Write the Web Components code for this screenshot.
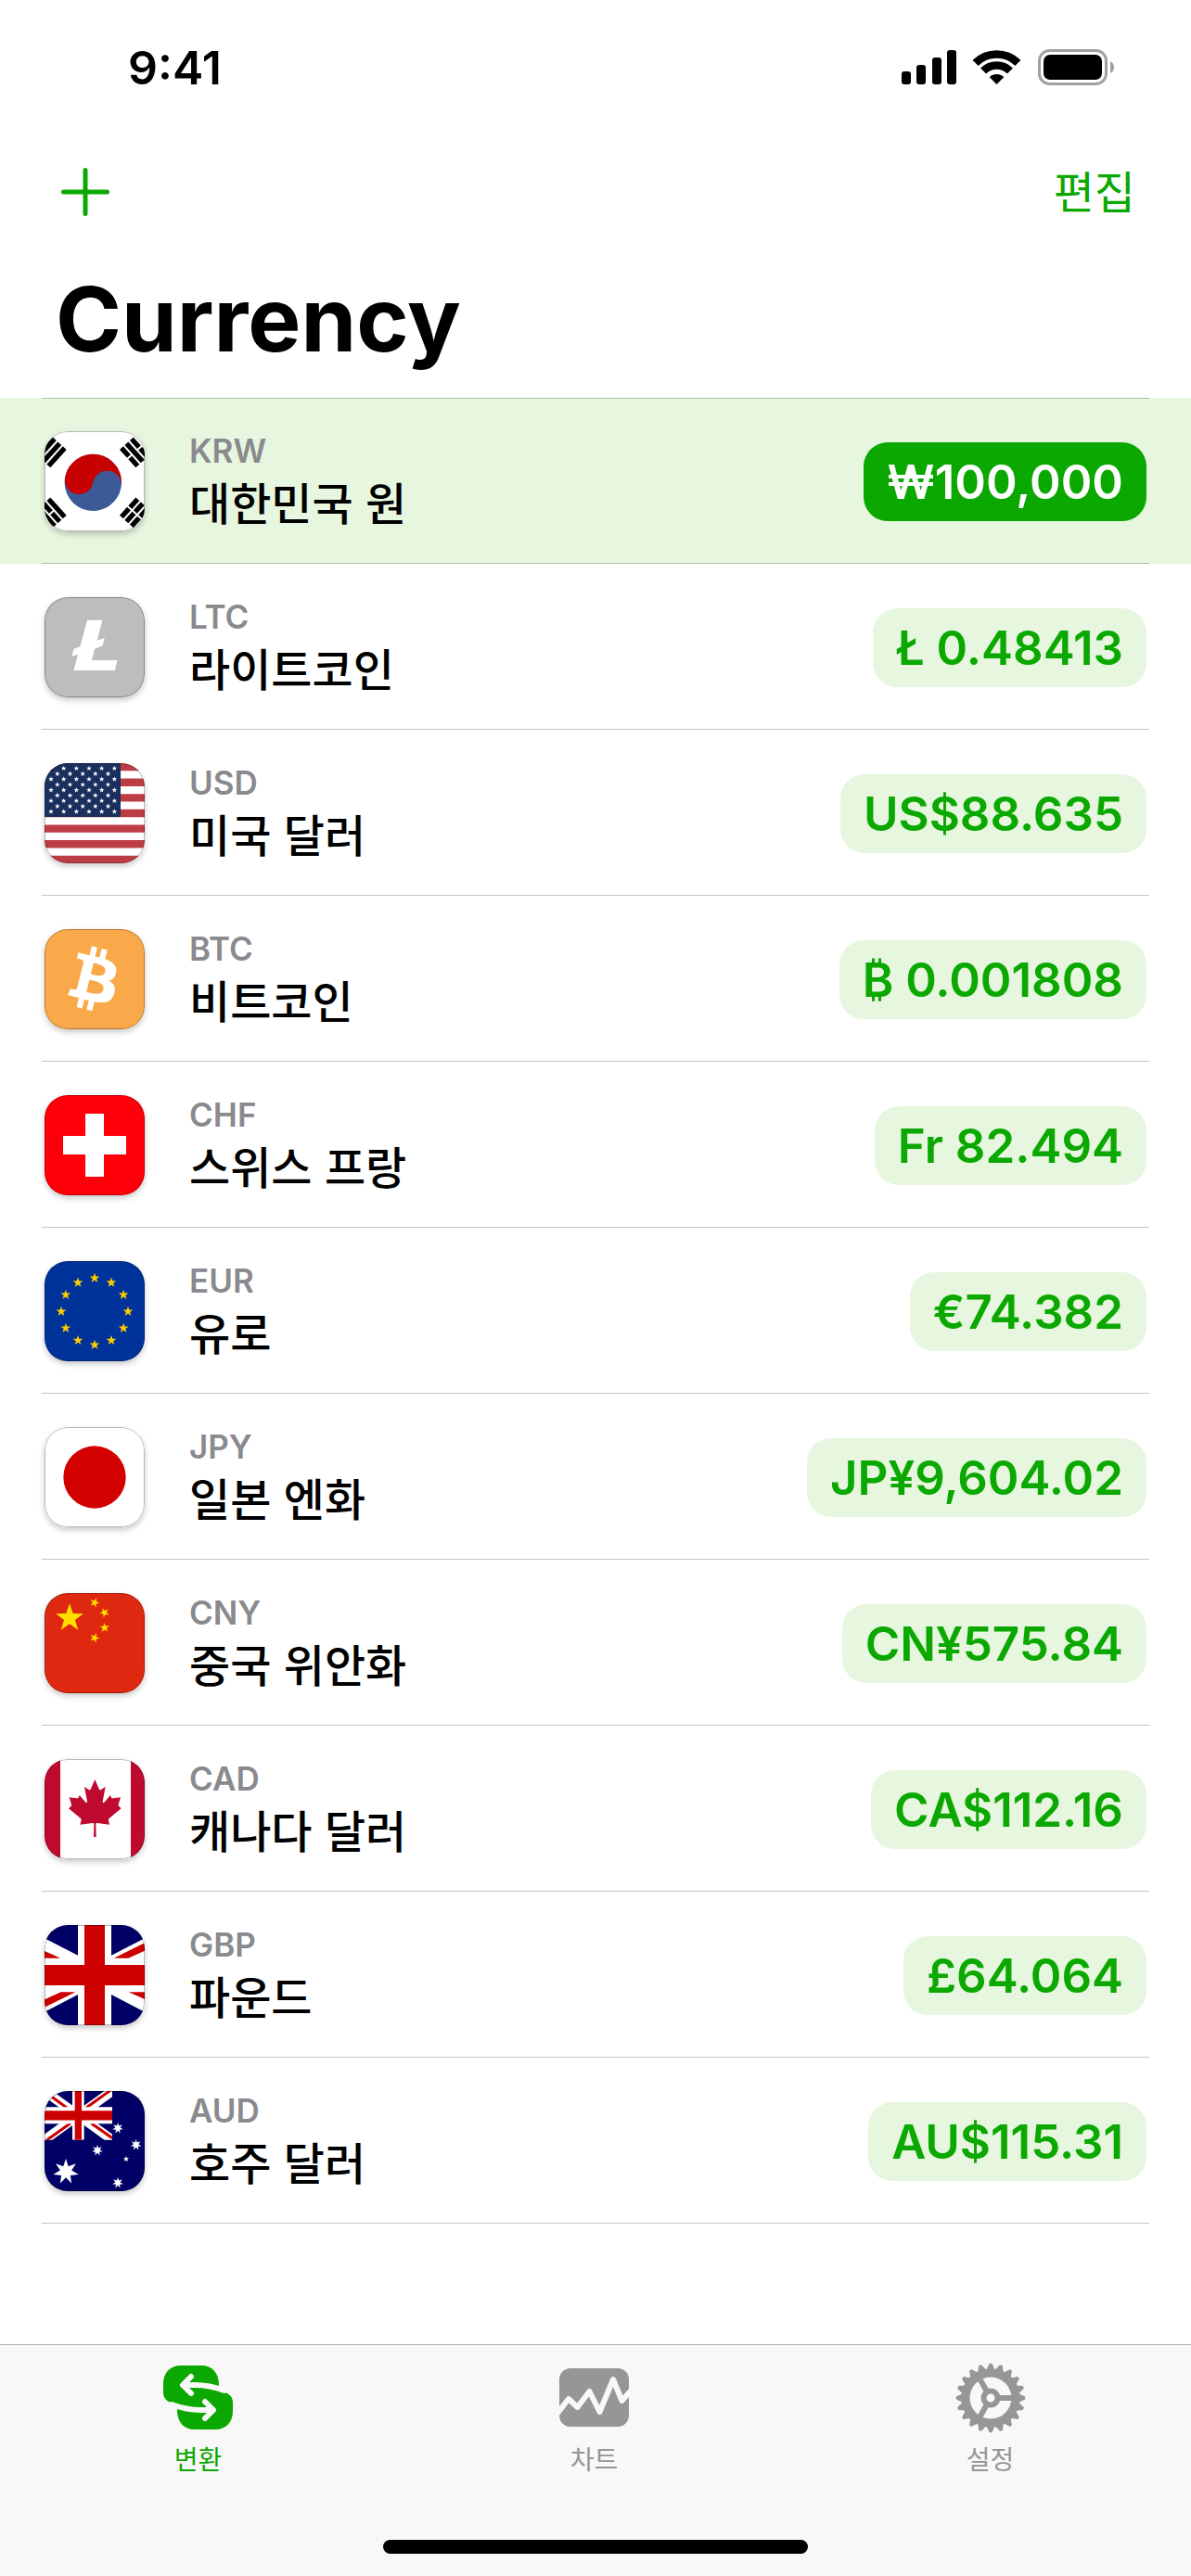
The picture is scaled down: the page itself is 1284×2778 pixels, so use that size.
<!DOCTYPE html>
<html lang="ko">
<head>
<meta charset="utf-8">
<meta name="viewport" content="width=device-width, initial-scale=1">
<title>Currency</title>
<style>
  :root {
    --green: #0aa800;
    --green-light: #e7f6df;
    --gray: #8a8a8e;
    --tab-gray: #969696;
    --separator: rgba(60, 60, 67, 0.3);
    --font-latin: Inter, "Noto Sans CJK KR", sans-serif;
    --font-korean: "Noto Sans CJK KR", sans-serif;
  }
  body {
    margin: 0;
    min-height: 100vh;
    display: flex;
    flex-direction: column;
    background: white;
    color: black;
    font-family: var(--font-latin);
  }
  main {
    flex: 1;
  }
</style>
</head>
<body>
<status-bar>9:41</status-bar>
<nav-header>
  <span slot="action">편집</span>
  Currency
</nav-header>
<main>
  <currency-row flag="krw" active><span slot="code">KRW</span><span slot="name">대한민국 원</span>₩100,000</currency-row>
  <currency-row flag="ltc"><span slot="code">LTC</span><span slot="name">라이트코인</span>Ł 0.48413</currency-row>
  <currency-row flag="usd"><span slot="code">USD</span><span slot="name">미국 달러</span>US$88.635</currency-row>
  <currency-row flag="btc"><span slot="code">BTC</span><span slot="name">비트코인</span>₿ 0.001808</currency-row>
  <currency-row flag="chf"><span slot="code">CHF</span><span slot="name">스위스 프랑</span>Fr 82.494</currency-row>
  <currency-row flag="eur"><span slot="code">EUR</span><span slot="name">유로</span>€74.382</currency-row>
  <currency-row flag="jpy"><span slot="code">JPY</span><span slot="name">일본 엔화</span>JP¥9,604.02</currency-row>
  <currency-row flag="cny"><span slot="code">CNY</span><span slot="name">중국 위안화</span>CN¥575.84</currency-row>
  <currency-row flag="cad"><span slot="code">CAD</span><span slot="name">캐나다 달러</span>CA$112.16</currency-row>
  <currency-row flag="gbp"><span slot="code">GBP</span><span slot="name">파운드</span>£64.064</currency-row>
  <currency-row flag="aud"><span slot="code">AUD</span><span slot="name">호주 달러</span>AU$115.31</currency-row>
</main>
<tab-bar>
  <tab-item icon="convert" active>변환</tab-item>
  <tab-item icon="chart">차트</tab-item>
  <tab-item icon="settings">설정</tab-item>
</tab-bar>

<script>
// n-pointed star polygon, first point up unless turned by `turn` degrees
function star(cx, cy, r, fill, { points = 5, inner = 0.4, turn = 0 } = {}) {
  const list = [];
  for (let i = 0; i < points * 2; i++) {
    const radius = i % 2 ? r * inner : r;
    const a = (Math.PI * i) / points + ((turn - 90) * Math.PI) / 180;
    list.push(`${(cx + radius * Math.cos(a)).toFixed(1)},${(cy + radius * Math.sin(a)).toFixed(1)}`);
  }
  return `<polygon points="${list.join(" ")}" fill="${fill}"/>`;
}

// three bars of the Korean flag, "1" solid and "0" broken
function trigram(x, y, angle, bars) {
  const rects = [...bars].map((bar, i) => {
    const top = -29 + i * 22;
    return bar === "1"
      ? `<rect x="-39" y="${top}" width="78" height="16"/>`
      : `<rect x="-39" y="${top}" width="36" height="16"/><rect x="3" y="${top}" width="36" height="16"/>`;
  });
  return `<g transform="translate(${x} ${y}) rotate(${angle})">${rects.join("")}</g>`;
}

function usStars() {
  let out = "";
  for (let row = 0; row < 9; row++) {
    const odd = row % 2;
    for (let col = 0; col < (odd ? 5 : 6); col++) {
      // the first one would sit under the rounded corner
      if (row || col) out += star(21 + odd * 20.5 + col * 41, 17 + row * 17.5, 9, "#fff");
    }
  }
  return out;
}

function euStars() {
  let out = "";
  for (let i = 0; i < 12; i++) {
    const a = (i * Math.PI) / 6;
    out += star(162 + 108 * Math.cos(a), 163 + 108 * Math.sin(a), 17, "#fc0");
  }
  return out;
}

const seven = { points: 7, inner: 0.45 };

const FLAGS = {
  krw: `
    <rect width="324" height="324" fill="#fff"/>
    <g transform="rotate(10 157 166)">
      <circle cx="157" cy="166" r="92" fill="#3d5a98"/>
      <path d="M65 166A92 92 0 0 1 249 166A46 46 0 0 0 157 166A46 46 0 0 1 65 166Z" fill="#c70000"/>
    </g>
    ${trigram(22, 68, -48, "111")}
    ${trigram(292, 68, 48, "010")}
    ${trigram(22, 264, 228, "101")}
    ${trigram(292, 264, 132, "000")}`,
  ltc: `
    <rect width="324" height="324" fill="#bdbdbd"/>
    <path d="M138 74H187L170 140L194 132L188 156L162 168L153 204H235L228 237H94L108 185L89 192L94 168L115 160Z" fill="#fff"/>`,
  usd: `
    <rect width="324" height="324" fill="#fff"/>
    <path d="M0 12.5H324M0 62.3H324M0 112.1H324M0 162H324M0 211.8H324M0 261.7H324M0 311.5H324" stroke="#bd3d44" stroke-width="24.9"/>
    <rect width="246" height="174" fill="#192f5d"/>
    ${usStars()}`,
  btc: `
    <rect width="324" height="324" fill="#f9a94a"/>
    <path transform="translate(157 159) scale(10.4) translate(-16 -16)" fill="#fff" d="M23.189 14.02c.314-2.096-1.283-3.223-3.465-3.975l.708-2.84-1.728-.43-.69 2.765c-.454-.114-.92-.22-1.385-.326l.695-2.783L15.596 6l-.708 2.839c-.376-.086-.746-.17-1.104-.26l.002-.009-2.384-.595-.46 1.846s1.283.294 1.256.312c.7.175.826.638.805 1.006l-1.989 7.98c-.086.212-.303.531-.793.41.018.025-1.256-.313-1.256-.313l-.858 1.978 2.25.561c.418.105.828.215 1.231.318l-.715 2.872 1.727.43.708-2.84c.472.127.93.245 1.378.357l-.706 2.828 1.728.43.715-2.866c2.948.558 5.164.333 6.097-2.333.752-2.146-.037-3.385-1.588-4.192 1.13-.26 1.98-1.003 2.207-2.538zm-3.95 5.538c-.533 2.147-4.148.986-5.32.695l.95-3.805c1.172.293 4.929.872 4.37 3.11zm.535-5.569c-.487 1.953-3.495.96-4.47.717l.86-3.45c.975.243 4.118.696 3.61 2.733z"/>`,
  chf: `
    <rect width="324" height="324" fill="#ff000a"/>
    <path d="M132 60H192V132H264V192H192V264H132V192H60V132H132Z" fill="#fff"/>`,
  eur: `
    <rect width="324" height="324" fill="#039"/>
    ${euStars()}`,
  jpy: `
    <rect width="324" height="324" fill="#fff"/>
    <circle cx="162" cy="162" r="101" fill="#d30000"/>`,
  cny: `
    <rect width="324" height="324" fill="#de2910"/>
    ${star(81, 81, 47, "#ffde00")}
    ${star(162, 31, 16, "#ffde00", { turn: 22 })}
    ${star(194, 63, 16, "#ffde00", { turn: 46 })}
    ${star(194, 112, 16, "#ffde00", { turn: -2 })}
    ${star(162, 145, 16, "#ffde00", { turn: 20 })}`,
  cad: `
    <rect width="324" height="324" fill="#fff"/>
    <path d="M0 0H51V324H0ZM279 0H324V324H279Z" fill="#bf0a30"/>
    <path fill="#bf0a30" d="M163 66L149 98Q147 101 143 99L129 89L138 137Q138 143 133 140L113 117L109 126Q108 128 104 127L80 124L87 147Q88 151 85 153L78 160L117 192Q120 195 119 198L115 212L156 207Q160 207 160 211L159 252H167L166 211Q166 207 170 207L210 212L207 198Q206 195 209 192L248 160L241 153Q238 151 239 147L246 124L222 127Q218 128 217 126L213 117L193 140Q188 143 188 137L197 89L183 99Q179 101 177 98Z"/>`,
  gbp: `
    <rect width="324" height="324" fill="#fff"/>
    <path d="M0 0H108V98L0 43ZM324 0H216V98L324 43ZM0 324H108V225L0 281ZM324 324H216V225L324 281Z" fill="#006"/>
    <path d="M0 84L52 107H0ZM224 107L324 58V83L271 107ZM100 217L0 266V241L53 217ZM324 240L272 217H324Z" fill="#c00"/>
    <path d="M129 0H195V129H324V195H195V324H129V195H0V129H129Z" fill="#c00"/>`,
  aud: `
    <rect width="324" height="324" fill="#006"/>
    <svg width="219" height="158">
      <path d="M0 0L219 158M219 0L0 158" stroke="#fff" stroke-width="30"/>
      <path d="M10 9L72 54M151 104L219 152M135 54L213 -2M6 160L84 104" stroke="#c00" stroke-width="9"/>
      <path d="M109 0V158M0 79H219" stroke="#fff" stroke-width="38"/>
      <path d="M0 79H219" stroke="#fff" stroke-width="54"/>
      <path d="M109 0V158" stroke="#c00" stroke-width="22"/>
      <path d="M0 79H219" stroke="#c00" stroke-width="31"/>
    </svg>
    ${star(69, 261, 42, "#fff", seven)}
    ${star(237, 120, 18, "#fff", seven)}
    ${star(296, 174, 18, "#fff", seven)}
    ${star(171, 192, 18, "#fff", seven)}
    ${star(237, 297, 18, "#fff", seven)}
    ${star(264, 220, 10, "#fff")}`,
};

function gearPath() {
  const at = (r, deg) => {
    const a = (deg * Math.PI) / 180;
    return `${(38 + r * Math.cos(a)).toFixed(2)} ${(38 + r * Math.sin(a)).toFixed(2)}`;
  };
  const steps = [];
  for (let i = 0; i < 20; i++) {
    const a = i * 18;
    steps.push(at(31, a - 6.5), at(36.5, a - 1.5), at(36.5, a + 1.5), at(31, a + 6.5));
  }
  return `M${steps.join("L")}Z`;
}

const ICONS = {
  convert: `
    <g transform="translate(0 3)">
      <path fill="currentColor" d="M0 20C0 8 7 0 19 0H41C53 0 60 8 60 21V26C71 30 75 33 75 40V49C75 61 68 69 56 69H34C22 69 15 61 15 48V43C4 39 0 36 0 29Z"/>
      <g fill="none" stroke="#f8f8f8" stroke-width="6" stroke-linecap="round" stroke-linejoin="round">
        <path d="M30 12L21 21L30 30M22 21H34Q50 21 66 27"/>
        <path d="M45 39L54 48L45 57M53 48H41Q25 48 9 42"/>
      </g>
    </g>`,
  chart: `
    <rect y="6" width="75" height="63" rx="12" fill="currentColor"/>
    <path d="M-4 57L10 39L19.500 48L32.500 31L43.500 53L58 18L67.500 41L79 28" fill="none" stroke="#f8f8f8" stroke-width="6" stroke-linejoin="round"/>`,
  settings: `
    <path d="${gearPath()}" fill="currentColor" stroke="currentColor" stroke-width="1.500" stroke-linejoin="round"/>
    <circle cx="38" cy="38" r="22.500" fill="#f8f8f8"/>
    <path d="M38 38H62M38 38L26 17M38 38L26 59" stroke="currentColor" stroke-width="6"/>
    <circle cx="38" cy="38" r="7.500" fill="#f8f8f8" stroke="currentColor" stroke-width="6"/>`,
};

class StatusBar extends HTMLElement {
  constructor() {
    super();
    this.attachShadow({ mode: "open" }).innerHTML = `
      <style>
        :host {
          display: flex;
          align-items: center;
          justify-content: space-between;
          padding: 0 82px 0 138px;
          height: 145px;
          font-size: 50px;
          font-weight: 600;
        }
        .icons {
          display: flex;
          gap: 18px;
        }
      </style>
      <slot></slot>
      <div class="icons">
        <svg width="59" height="39" viewBox="0 0 59 39">
          <rect y="24" width="10" height="14" rx="3"/>
          <rect x="16" y="17" width="10" height="21" rx="3"/>
          <rect x="33" y="9" width="10" height="29" rx="3"/>
          <rect x="49" y="1" width="10" height="37" rx="3"/>
        </svg>
        <svg width="51" height="39" viewBox="0 0 51 39">
          <clipPath id="wedge"><path d="M25.500 38L-12 0V-4H63V0Z"/></clipPath>
          <g clip-path="url(#wedge)" fill="none" stroke="#000">
            <circle cx="25.500" cy="38" r="32.500" stroke-width="8.500"/>
            <circle cx="25.500" cy="38" r="20.500" stroke-width="8.500"/>
            <circle cx="25.500" cy="38" r="11" fill="#000" stroke="none"/>
          </g>
        </svg>
        <svg width="84" height="39" viewBox="0 0 84 39">
          <rect x="2.500" y="1.500" width="72" height="36" rx="11" fill="none" stroke="#a0a0a0" stroke-width="3"/>
          <rect x="7" y="6" width="63" height="27" rx="7"/>
          <path d="M79 13Q83 15 83 19.500T79 26Z" fill="#a0a0a0"/>
        </svg>
      </div>`;
  }
}
customElements.define("status-bar", StatusBar);

class NavHeader extends HTMLElement {
  constructor() {
    super();
    this.attachShadow({ mode: "open" }).innerHTML = `
      <style>
        :host {
          display: block;
        }
        .bar {
          display: flex;
          align-items: center;
          justify-content: space-between;
          padding: 0 60px 0 66px;
          height: 124px;
        }
        button {
          display: flex;
          padding: 0;
          border: 0;
          background: none;
          color: var(--green);
          font: 48px/60px var(--font-korean);
          cursor: pointer;
        }
        .action {
          padding-bottom: 6px;
        }
        h1 {
          margin: 0;
          padding: 0 60px 10px;
          font-size: 96px;
          line-height: 150px;
          font-weight: 700;
        }
      </style>
      <div class="bar">
        <button aria-label="추가">
          <svg width="52" height="52" viewBox="0 0 52 52" fill="none" stroke="currentColor" stroke-width="5" stroke-linecap="round">
            <path d="M26 2.500V49.500M2.500 26H49.500"/>
          </svg>
        </button>
        <button class="action"><slot name="action"></slot></button>
      </div>
      <h1><slot></slot></h1>`;
  }
}
customElements.define("nav-header", NavHeader);

class CurrencyRow extends HTMLElement {
  constructor() {
    super();
    this.attachShadow({ mode: "open" }).innerHTML = `
      <style>
        :host {
          display: block;
          padding: 0 45px;
        }
        :host([active]) {
          background: var(--green-light);
        }
        .row {
          display: flex;
          align-items: center;
          padding: 36px 3px 34px;
          border-bottom: 1px solid var(--separator);
        }
        :host([active]) .row {
          padding-top: 35px;
          border-top: 1px solid var(--separator);
        }
        .flag {
          position: relative;
          width: 108px;
          height: 108px;
          border-radius: 25px;
          overflow: hidden;
          flex: none;
        }
        .shadow {
          border-radius: 25px;
          box-shadow: 0 3px 6px rgba(0, 0, 0, 0.22);
        }
        .flag svg {
          display: block;
        }
        /* hairline drawn over the flag */
        .flag::after {
          content: "";
          position: absolute;
          inset: 0;
          border: 1px solid rgba(0, 0, 0, 0.28);
          border-radius: 25px;
        }
        .label {
          flex: 1;
          display: flex;
          flex-direction: column;
          margin-left: 48px;
        }
        .code {
          color: var(--gray);
          font-size: 35px;
          line-height: 42px;
          font-weight: 600;
        }
        .name {
          font-family: var(--font-korean);
          font-size: 48px;
          line-height: 66px;
          font-weight: 500;
        }
        button {
          padding: 12px 25px;
          border: 0;
          border-radius: 26px;
          background: var(--green-light);
          color: var(--green);
          font: 600 51px/61px var(--font-latin);
          white-space: nowrap;
          cursor: pointer;
        }
        :host([active]) button {
          background: var(--green);
          color: white;
        }
      </style>
      <div class="row">
        <div class="shadow">
          <div class="flag">
            <svg width="108" height="108" viewBox="0 0 324 324">${FLAGS[this.getAttribute("flag")]}</svg>
          </div>
        </div>
        <div class="label">
          <span class="code"><slot name="code"></slot></span>
          <span class="name"><slot name="name"></slot></span>
        </div>
        <button><slot></slot></button>
      </div>`;
  }
}
customElements.define("currency-row", CurrencyRow);

class TabItem extends HTMLElement {
  constructor() {
    super();
    const icon = this.getAttribute("icon");
    this.attachShadow({ mode: "open" }).innerHTML = `
      <style>
        :host {
          display: block;
          flex: 1;
          color: var(--tab-gray);
        }
        :host([active]) {
          color: var(--green);
        }
        a {
          display: flex;
          flex-direction: column;
          align-items: center;
          gap: 9px;
          padding-top: 19px;
          color: inherit;
          font: 28px/36px var(--font-korean);
          text-decoration: none;
        }
      </style>
      <a href="#${icon}">
        <svg width="75" height="76" viewBox="0 0 75 76" overflow="${icon === "settings" ? "visible" : "hidden"}">${ICONS[icon]}</svg>
        <slot></slot>
      </a>`;
  }
}
customElements.define("tab-item", TabItem);

class TabBar extends HTMLElement {
  constructor() {
    super();
    this.attachShadow({ mode: "open" }).innerHTML = `
      <style>
        :host {
          display: block;
          padding-bottom: 24px;
          border-top: 1px solid #b2b2b2;
          background: #f8f8f8;
        }
        nav {
          display: flex;
          padding-right: 3px;
        }
        .home {
          width: 458px;
          max-width: 60%;
          height: 15px;
          margin: 70px auto 0;
          border-radius: 8px;
          background: black;
        }
      </style>
      <nav><slot></slot></nav>
      <div class="home"></div>`;
  }
}
customElements.define("tab-bar", TabBar);
</script>
</body>
</html>
